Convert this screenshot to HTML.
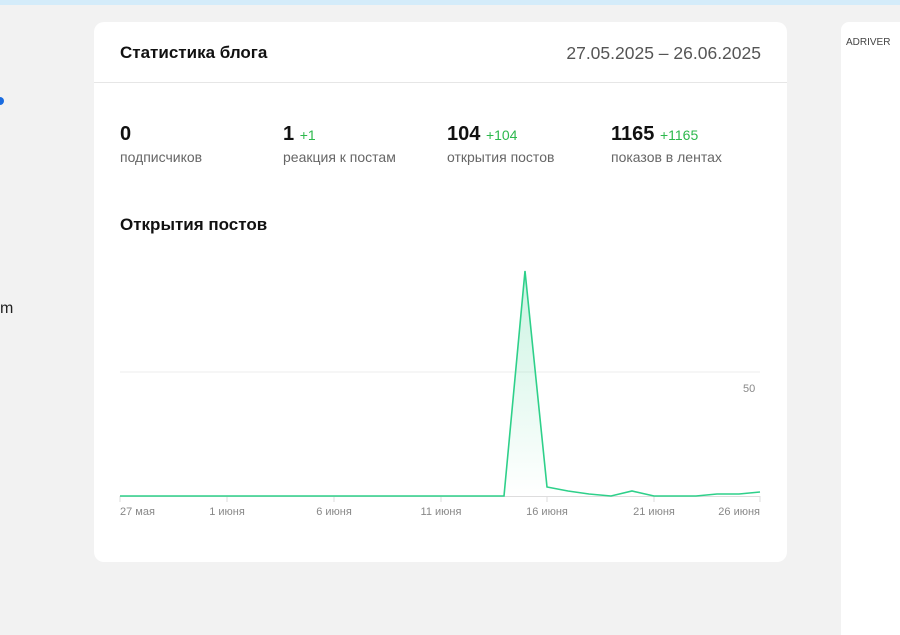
<!DOCTYPE html>
<html><head><meta charset="utf-8"><style>
body{margin:0;width:900px;height:635px;background:#f2f2f2;font-family:"Liberation Sans",sans-serif;position:relative;overflow:hidden}
.top{position:absolute;left:0;top:0;width:900px;height:5px;background:#d4ecfa}
.card{position:absolute;left:94px;top:22px;width:693px;height:540px;background:#fff;border-radius:10px}
.hdr{height:60px;border-bottom:1px solid #e6e6e6}
.t{position:absolute;font-size:17px;font-weight:bold;color:#111}
.date{position:absolute;right:26px;top:21px;font-size:17.5px;color:#555}
.num{position:absolute;top:101px;font-size:20px;font-weight:bold;color:#111}
.num span{font-size:14px;font-weight:normal;color:#2db84d}
.lab{position:absolute;top:127px;font-size:14px;color:#666}
.side{position:absolute;left:841px;top:22px;width:59px;height:613px;background:#fff;border-radius:8px 0 0 0}
.ax{font-size:11px;fill:#888;font-family:"Liberation Sans",sans-serif}
</style></head><body>
<div class="top"></div>
<div style="position:absolute;left:-4px;top:97px;width:8px;height:8px;border-radius:50%;background:#1a6ce0"></div>
<div style="position:absolute;left:0;top:300px;font-size:16px;color:#222">m</div>
<div class="card">
<div class="hdr"></div>
<div class="t" style="left:26px;top:21px">Статистика блога</div>
<div class="date">27.05.2025 – 26.06.2025</div>
<div class="num" style="left:26px">0</div><div class="lab" style="left:26px">подписчиков</div>
<div class="num" style="left:189px">1 <span>+1</span></div><div class="lab" style="left:189px">реакция к постам</div>
<div class="num" style="left:353px">104 <span>+104</span></div><div class="lab" style="left:353px">открытия постов</div>
<div class="num" style="left:517px">1165 <span>+1165</span></div><div class="lab" style="left:517px">показов в лентах</div>
<div class="t" style="left:26px;top:193px">Открытия постов</div>
</div>
<svg style="position:absolute;left:0;top:0" width="900" height="635">
<defs><linearGradient id="g" x1="0" y1="0" x2="0" y2="1"><stop offset="0" stop-color="#2ed08a" stop-opacity=".25"/><stop offset="1" stop-color="#2ed08a" stop-opacity="0"/></linearGradient></defs>
<line x1="120" y1="372" x2="760" y2="372" stroke="#eee"/>
<text x="743" y="392" class="ax">50</text>
<line x1="120" y1="496.5" x2="760" y2="496.5" stroke="#ddd"/>
<g stroke="#ddd"><line x1="120" y1="496" x2="120" y2="502"/><line x1="227" y1="496" x2="227" y2="502"/><line x1="334" y1="496" x2="334" y2="502"/><line x1="441" y1="496" x2="441" y2="502"/><line x1="547" y1="496" x2="547" y2="502"/><line x1="654" y1="496" x2="654" y2="502"/><line x1="760" y1="496" x2="760" y2="502"/></g>
<path d="M504 496 L525 271 L547 487 L568 491 L589 494 L611 496 L632 491 L654 496 L696 496 L717 494 L739 494 L760 492 L760 496 Z" fill="url(#g)"/>
<polyline points="120,496 504,496 525,271 547,487 568,491 589,494 611,496 632,491 654,496 696,496 717,494 739,494 760,492" fill="none" stroke="#2ed08a" stroke-width="1.6"/>
<g class="ax"><text x="120" y="515">27 мая</text><text x="227" y="515" text-anchor="middle">1 июня</text><text x="334" y="515" text-anchor="middle">6 июня</text><text x="441" y="515" text-anchor="middle">11 июня</text><text x="547" y="515" text-anchor="middle">16 июня</text><text x="654" y="515" text-anchor="middle">21 июня</text><text x="760" y="515" text-anchor="end">26 июня</text></g>
</svg>
<div class="side"><div style="position:absolute;left:5px;top:15px;font-size:10px;color:#444">ADRIVER</div></div>
</body></html>
